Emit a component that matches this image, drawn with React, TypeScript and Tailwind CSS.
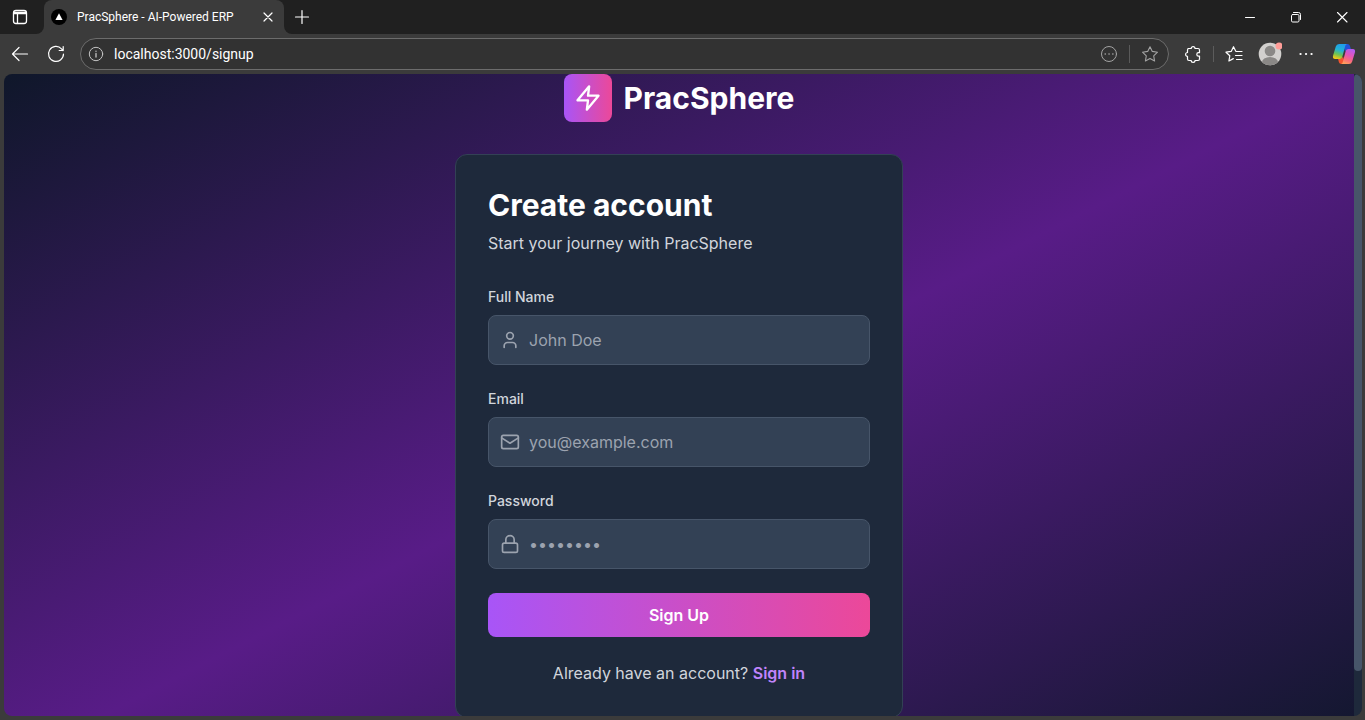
import type { ReactNode } from "react";

type IconProps = { className?: string; children: ReactNode; width?: number; box?: number };

function Icon({ className = "", children, width = 1, box = 20 }: IconProps) {
  return (
    <svg
      aria-hidden="true"
      className={className}
      viewBox={`0 0 ${box} ${box}`}
      fill="none"
      stroke="currentColor"
      strokeWidth={width}
      strokeLinecap="round"
      strokeLinejoin="round"
    >
      {children}
    </svg>
  );
}

function TabStrip() {
  return (
    <div className="flex h-[34px] shrink-0 items-stretch bg-[#3b3b3b] text-white">
      <button
        aria-label="Tab actions"
        className="flex w-11 shrink-0 items-center justify-center rounded-br-lg bg-[#202020] pr-1"
      >
        <Icon className="size-5" width={1.3}>
          <rect x="3.5" y="3.5" width="13" height="13" rx="2.5" />
          <path d="M4 5.500h12M4 6.500h12M7.500 7v9" />
        </Icon>
      </button>
      <div className="flex w-60 shrink-0 bg-[#202020]">
        <div className="flex flex-1 items-center rounded-t-lg bg-[#3b3b3b] pl-[7px]">
          <svg aria-hidden="true" className="size-4 shrink-0" viewBox="0 0 16 16">
            <circle cx="8" cy="8" r="8" fill="#000" />
            <path d="M8 4.200 11.600 11H4.400z" fill="#fff" />
          </svg>
          <span className="ml-2.5 flex-1 whitespace-nowrap text-xs">PracSphere - AI-Powered ERP</span>
          <button aria-label="Close tab" className="mr-2 flex size-4 items-center justify-center">
            <Icon className="size-4" box={16} width={1.2}>
              <path d="m4 4 8 8M12 4l-8 8" />
            </Icon>
          </button>
        </div>
      </div>
      <div className="flex flex-1 rounded-bl-lg bg-[#202020]">
        <button aria-label="New tab" className="flex w-9 items-center justify-center">
          <Icon className="size-4" box={16} width={1.2}>
            <path d="M8 1.500v13M1.500 8h13" />
          </Icon>
        </button>
        <div className="ml-auto flex">
          <button aria-label="Minimize" className="flex w-[46px] items-center justify-center">
            <Icon className="size-4" box={16}>
              <path d="M3.500 8.500h9" />
            </Icon>
          </button>
          <button aria-label="Restore" className="flex w-[46px] items-center justify-center">
            <Icon className="size-4" box={16}>
              <rect x="3.5" y="5.5" width="7.5" height="7.5" rx="1.2" />
              <path d="M5.500 3.500h5a2 2 0 0 1 2 2v5" />
            </Icon>
          </button>
          <button aria-label="Close window" className="flex w-[46px] items-center justify-center">
            <Icon className="size-4" box={16} width={1.1}>
              <path d="m3.500 3.500 9.500 9.500M13 3.500 3.500 13" />
            </Icon>
          </button>
        </div>
      </div>
    </div>
  );
}

function Toolbar() {
  return (
    <div className="flex h-10 shrink-0 items-center bg-[#3b3b3b] text-white">
      <button aria-label="Back" className="ml-2.5 shrink-0">
        <Icon className="size-5" width={1.2}>
          <path d="M17.500 10H2.500M9 3.500 2.500 10 9 16.500" />
        </Icon>
      </button>
      <button aria-label="Refresh" className="ml-4 shrink-0">
        <Icon className="size-5" width={1.2}>
          <path d="M17.500 10a7.500 7.500 0 1 1-2-5.200l1.500 1.700M17.200 2.500v4h-4" />
        </Icon>
      </button>
      <div className="ml-3.5 flex h-8 flex-1 items-center rounded-full border border-[#6c6c6c] bg-[#323232] pr-2 pl-[7px]">
        <Icon className="size-4 shrink-0 text-[#c4c4c4]" box={16}>
          <circle cx="8" cy="8" r="6.7" />
          <path d="M8 7.500v3.500M8 5.100v.2" strokeWidth="1.300" />
        </Icon>
        <input
          aria-label="Address"
          className="ml-2.5 min-w-0 flex-1 bg-transparent text-sm text-white outline-none"
          defaultValue="localhost:3000/signup"
        />
        <button aria-label="Site options" className="text-[#a3a3a3]">
          <Icon className="size-5">
            <circle cx="10" cy="10" r="7.5" />
            <path d="M6.200 10h.1M10 10h.1M13.800 10h.1" strokeWidth="1.600" />
          </Icon>
        </button>
        <span className="mx-2.5 h-[18px] w-px bg-[#5a5a5a]" />
        <button aria-label="Add to favorites" className="text-[#a3a3a3]">
          <Icon className="size-5" width={1.1}>
            <path d="m10 2.700 2.300 4.700 5.200.8-3.800 3.600.9 5.200-4.600-2.400L5.400 17l.9-5.200L2.500 8.200l5.200-.8z" />
          </Icon>
        </button>
      </div>
      <button aria-label="Extensions" className="ml-3.5">
        <Icon className="size-5" width={1.2}>
          <path d="M5 4.500h3.200a1.900 1.900 0 0 1 3.800 0H15a1.500 1.500 0 0 1 1.500 1.500v2.700h-1a1.700 1.700 0 0 0 0 3.400h1v2.900a1.500 1.500 0 0 1-1.500 1.500h-3a1.900 1.900 0 0 1-3.800 0H6A1.500 1.500 0 0 1 4.500 15v-2.700a1.900 1.900 0 0 1 0-3.800V6A1.500 1.500 0 0 1 6 4.500" />
        </Icon>
      </button>
      <span className="mx-2.5 h-4 w-px bg-[#5c5c5c]" />
      <button aria-label="Favorites">
        <Icon className="size-5" width={1.2}>
          <path d="M11.800 7.300 9.500 2.700 7.200 7.400l-5.200.8 3.800 3.600-.9 5.200 4.400-2.400M12.500 7.500H18M11.500 11.500H18M12.500 15.500H18" />
        </Icon>
      </button>
      <button aria-label="Profile" className="ml-3.5">
        <svg aria-hidden="true" className="size-6" viewBox="0 0 24 24">
          <clipPath id="avatar">
            <circle cx="12" cy="12" r="11.3" />
          </clipPath>
          <g clipPath="url(#avatar)">
            <rect width="24" height="24" fill="#d2d0ce" />
            <circle cx="12" cy="9" r="5.3" fill="#8a8886" />
            <ellipse cx="12" cy="20.500" rx="8" ry="5.500" fill="#8a8886" />
          </g>
          <circle cx="21" cy="4" r="3.500" fill="#ff9d98" />
        </svg>
      </button>
      <button aria-label="Settings and more" className="ml-3.5">
        <Icon className="size-5">
          <path d="M4.500 10h.1M10 10h.1M15.500 10h.1" strokeWidth="2.200" />
        </Icon>
      </button>
      <button aria-label="Copilot" className="mr-[9px] ml-4">
        <svg aria-hidden="true" className="size-6" viewBox="0 0 24 24">
          <defs>
            <linearGradient id="cool" x1="0.600" y1="0" x2="0.300" y2="1">
              <stop offset="0" stopColor="#1f9bea" />
              <stop offset="0.400" stopColor="#22b3d6" />
              <stop offset="0.700" stopColor="#6cc354" />
              <stop offset="1" stopColor="#f6c915" />
            </linearGradient>
            <linearGradient id="warm" x1="0.700" y1="0" x2="0.300" y2="1">
              <stop offset="0" stopColor="#b45cf0" />
              <stop offset="0.400" stopColor="#e455b8" />
              <stop offset="0.700" stopColor="#fa6a7d" />
              <stop offset="1" stopColor="#ffa15a" />
            </linearGradient>
          </defs>
          <path d="M11 2h4.500a2.500 2.500 0 0 1 2.400 1.800L19 7.500h-3a3 3 0 0 0-2.900 2z" fill="#2350d8" />
          <path d="M13 22H9.300a2.500 2.500 0 0 1-2.400-1.800L6 16.500h2.300a3 3 0 0 0 2.800-2z" fill="#f4542f" />
          <path d="M7.500 2h7.500a2.500 2.500 0 0 0-1.700 1.800L10.200 15.200a2.500 2.500 0 0 1-2.400 1.800H3.300C1 17 .6 15.300 1.100 13.500L3.800 4.600A3.500 3.500 0 0 1 7.500 2" fill="url(#cool)" />
          <path d="M16.500 22H9a2.500 2.500 0 0 0 1.700-1.800l3.100-11.400A2.500 2.500 0 0 1 16.200 7h4.500c2.300 0 2.700 1.700 2.200 3.500l-2.700 8.900a3.500 3.500 0 0 1-3.700 2.600" fill="url(#warm)" />
        </svg>
      </button>
    </div>
  );
}

type FieldProps = { id: string; label: string; type: string; placeholder: string; icon: ReactNode };

function Field({ id, label, type, placeholder, icon }: FieldProps) {
  return (
    <div>
      <label htmlFor={id} className="mb-2 block text-sm font-medium text-[#d1d5db]">
        {label}
      </label>
      <div className="relative">
        <Icon
          className="pointer-events-none absolute top-1/2 left-3 size-5 -translate-y-1/2 text-[#9ca3af]"
          box={24}
          width={2}
        >
          {icon}
        </Icon>
        <input
          id={id}
          type={type}
          placeholder={placeholder}
          className="block w-full rounded-lg border border-[#475569] bg-[#334155] py-3 pr-4 pl-10 text-base text-white placeholder:text-[#9ca3af]"
        />
      </div>
    </div>
  );
}

function SignupPage() {
  return (
    <main className="flex min-h-full flex-1 flex-col items-center self-start bg-linear-to-br/srgb from-[#0f172a] via-[#581c87] to-[#0f172a] pb-12 font-['Inter',sans-serif]">
      <div className="mb-8 flex items-center gap-3">
        <div className="flex size-12 items-center justify-center rounded-lg bg-linear-to-r/srgb from-[#a855f7] to-[#ec4899] text-white">
          <Icon className="size-7" box={24} width={2}>
            <path d="M13 2 3 14h9l-1 8 10-12h-9z" />
          </Icon>
        </div>
        <span className="text-3xl font-bold text-white">PracSphere</span>
      </div>
      <section className="w-full max-w-md rounded-xl border border-[#334155] bg-[#1e293b] p-8">
        <h1 className="mb-2 text-3xl font-bold text-white">Create account</h1>
        <p className="mb-8 text-base text-[#d1d5db]">Start your journey with PracSphere</p>
        <form className="space-y-6" onSubmit={(event) => event.preventDefault()}>
          <Field
            id="name"
            label="Full Name"
            type="text"
            placeholder="John Doe"
            icon={
              <>
                <path d="M19 21v-2a4 4 0 0 0-4-4H9a4 4 0 0 0-4 4v2" />
                <circle cx="12" cy="7" r="4" />
              </>
            }
          />
          <Field
            id="email"
            label="Email"
            type="email"
            placeholder="you@example.com"
            icon={
              <>
                <rect x="2" y="4" width="20" height="16" rx="2" />
                <path d="m22 7-10 6.500L2 7" />
              </>
            }
          />
          <Field
            id="password"
            label="Password"
            type="password"
            placeholder="••••••••"
            icon={
              <>
                <rect x="3" y="11" width="18" height="11" rx="2" />
                <path d="M7 11V7a5 5 0 0 1 10 0v4" />
              </>
            }
          />
          <button
            type="submit"
            className="w-full rounded-lg bg-linear-to-r/srgb from-[#a855f7] to-[#ec4899] py-2.5 text-base font-semibold text-white"
          >
            Sign Up
          </button>
        </form>
        <p className="mt-6 text-center text-base text-[#d1d5db]">
          Already have an account?{" "}
          <a href="#signin" className="font-semibold text-[#c084fc]">
            Sign in
          </a>
        </p>
      </section>
    </main>
  );
}

export default function App() {
  return (
    <div className="flex h-screen flex-col bg-[#3b3b3b] font-['Roboto',sans-serif]">
      <TabStrip />
      <Toolbar />
      <div className="mr-[3px] mb-1 ml-1 flex min-h-0 flex-1 overflow-hidden rounded-lg">
        <SignupPage />
        <div className="w-2 shrink-0 bg-[#1e293b]">
          <div className="h-[93%] rounded-full bg-[#475569]" />
        </div>
      </div>
    </div>
  );
}
